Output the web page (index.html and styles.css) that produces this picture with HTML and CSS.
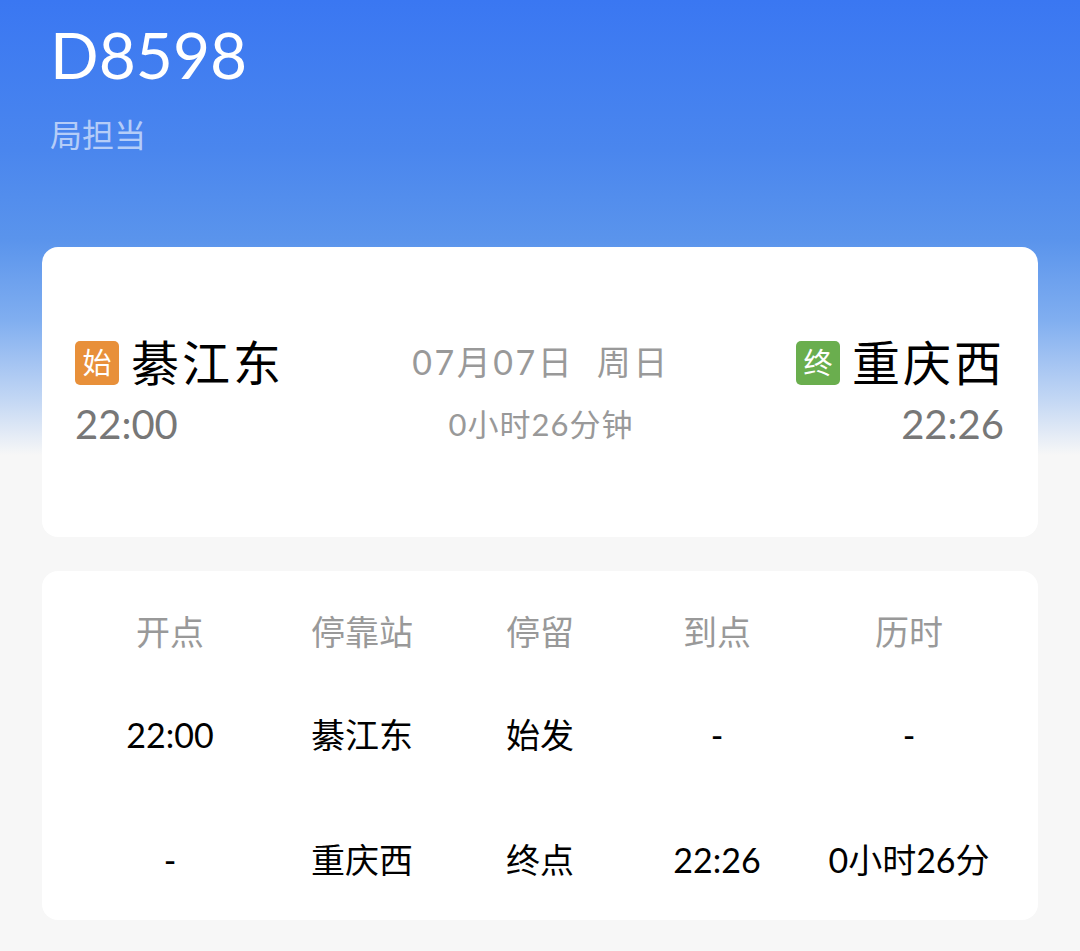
FILE: index.html
```html
<!DOCTYPE html>
<html lang="zh-CN">
<head>
    <meta charset="UTF-8">
    <meta name="viewport" content="width=device-width, initial-scale=1.0">
    <title>D8598</title>

    <link rel="stylesheet" href="styles.css">
</head>
<body>
    <div class="page">
        <header class="train-head">
            <h1 class="train-no">D8598</h1>
            <p class="bureau">局担当</p>
        </header>

        <section class="card route">
            <div class="station">
                <div class="station-name"><span class="tag tag-start">始</span>綦江东</div>
                <div class="station-time">22:00</div>
            </div>
            <div class="trip">
                <div class="trip-date">07月07日&nbsp;&nbsp;周日</div>
                <div class="trip-duration">0小时26分钟</div>
            </div>
            <div class="station station-end">
                <div class="station-name"><span class="tag tag-end">终</span>重庆西</div>
                <div class="station-time">22:26</div>
            </div>
        </section>

        <section class="card stops">
            <div class="stop-row stop-head">
                <span>开点</span>
                <span>停靠站</span>
                <span>停留</span>
                <span>到点</span>
                <span>历时</span>
            </div>
            <div class="stop-row">
                <span>22:00</span>
                <span>綦江东</span>
                <span>始发</span>
                <span>-</span>
                <span>-</span>
            </div>
            <div class="stop-row">
                <span>-</span>
                <span>重庆西</span>
                <span>终点</span>
                <span>22:26</span>
                <span>0小时26分</span>
            </div>
        </section>
    </div>
</body>
</html>
```

FILE: styles.css
```css
body {
    margin: 0;
    font-family: Lato, "Noto Sans CJK SC", sans-serif;
    background: #f7f7f7 linear-gradient(to bottom, #3a77f2 0, #4a86ee 150px, #5a94ec 240px, #80aef0 320px, #c3d7f4 400px, #f7f7f7 455px) no-repeat;
    background-size: 100% 460px;
    min-height: 951px;
}
.page { padding: 0 42px 30px; }

.train-head { padding: 15px 8px 0; height: 247px; box-sizing: border-box; }
.train-no { margin: 0; font-size: 64px; font-weight: 400; line-height: 80px; color: #fff; }
.bureau { margin: 20px 0 0; font-size: 32px; line-height: 40px; color: rgba(255, 255, 255, 0.6); }

.card { background: #fff; border-radius: 16px; }

.route {
    height: 290px;
    display: flex;
    align-items: center;
    justify-content: space-between;
    padding: 0 33px 0 33px;
    box-sizing: border-box;
}
.station { display: flex; flex-direction: column; align-items: flex-start; }
.station-end { align-items: flex-end; }
.station-end .station-time { margin-right: 1px; }
.station-name { display: flex; align-items: center; font-size: 48px; line-height: 56px; color: #000; letter-spacing: 3px; }
.tag {
    width: 44px; height: 44px;
    border-radius: 5px;
    color: #fff;
    font-size: 29px;
    line-height: 44px;
    text-align: center;
    letter-spacing: 0;
    margin-right: 12px;
}
.tag-start { background: #e8903a; }
.tag-end { background: #6aae4e; }
.station-time { font-size: 40px; line-height: 50px; color: #777; margin-top: 8px; }

.trip { display: flex; flex-direction: column; align-items: center; color: #999; margin-left: 2px; }
.trip-date { font-size: 34px; line-height: 44px; letter-spacing: 2.5px; }
.trip-duration { font-size: 31px; line-height: 40px; margin-top: 20px; letter-spacing: 1px; }

.stops { margin-top: 34px; padding: 37px 32px 28px; height: 349px; box-sizing: border-box; }
.stop-row {
    display: grid;
    grid-template-columns: 192px 192px 164px 190px 1fr;
    font-size: 34px;
    line-height: 48px;
    color: #000;
    text-align: center;
    height: 48px;
}
.stop-row + .stop-row { margin-top: 55px; }
.stop-row + .stop-row + .stop-row { margin-top: 77px; }
.stop-head { color: #999; }
```
